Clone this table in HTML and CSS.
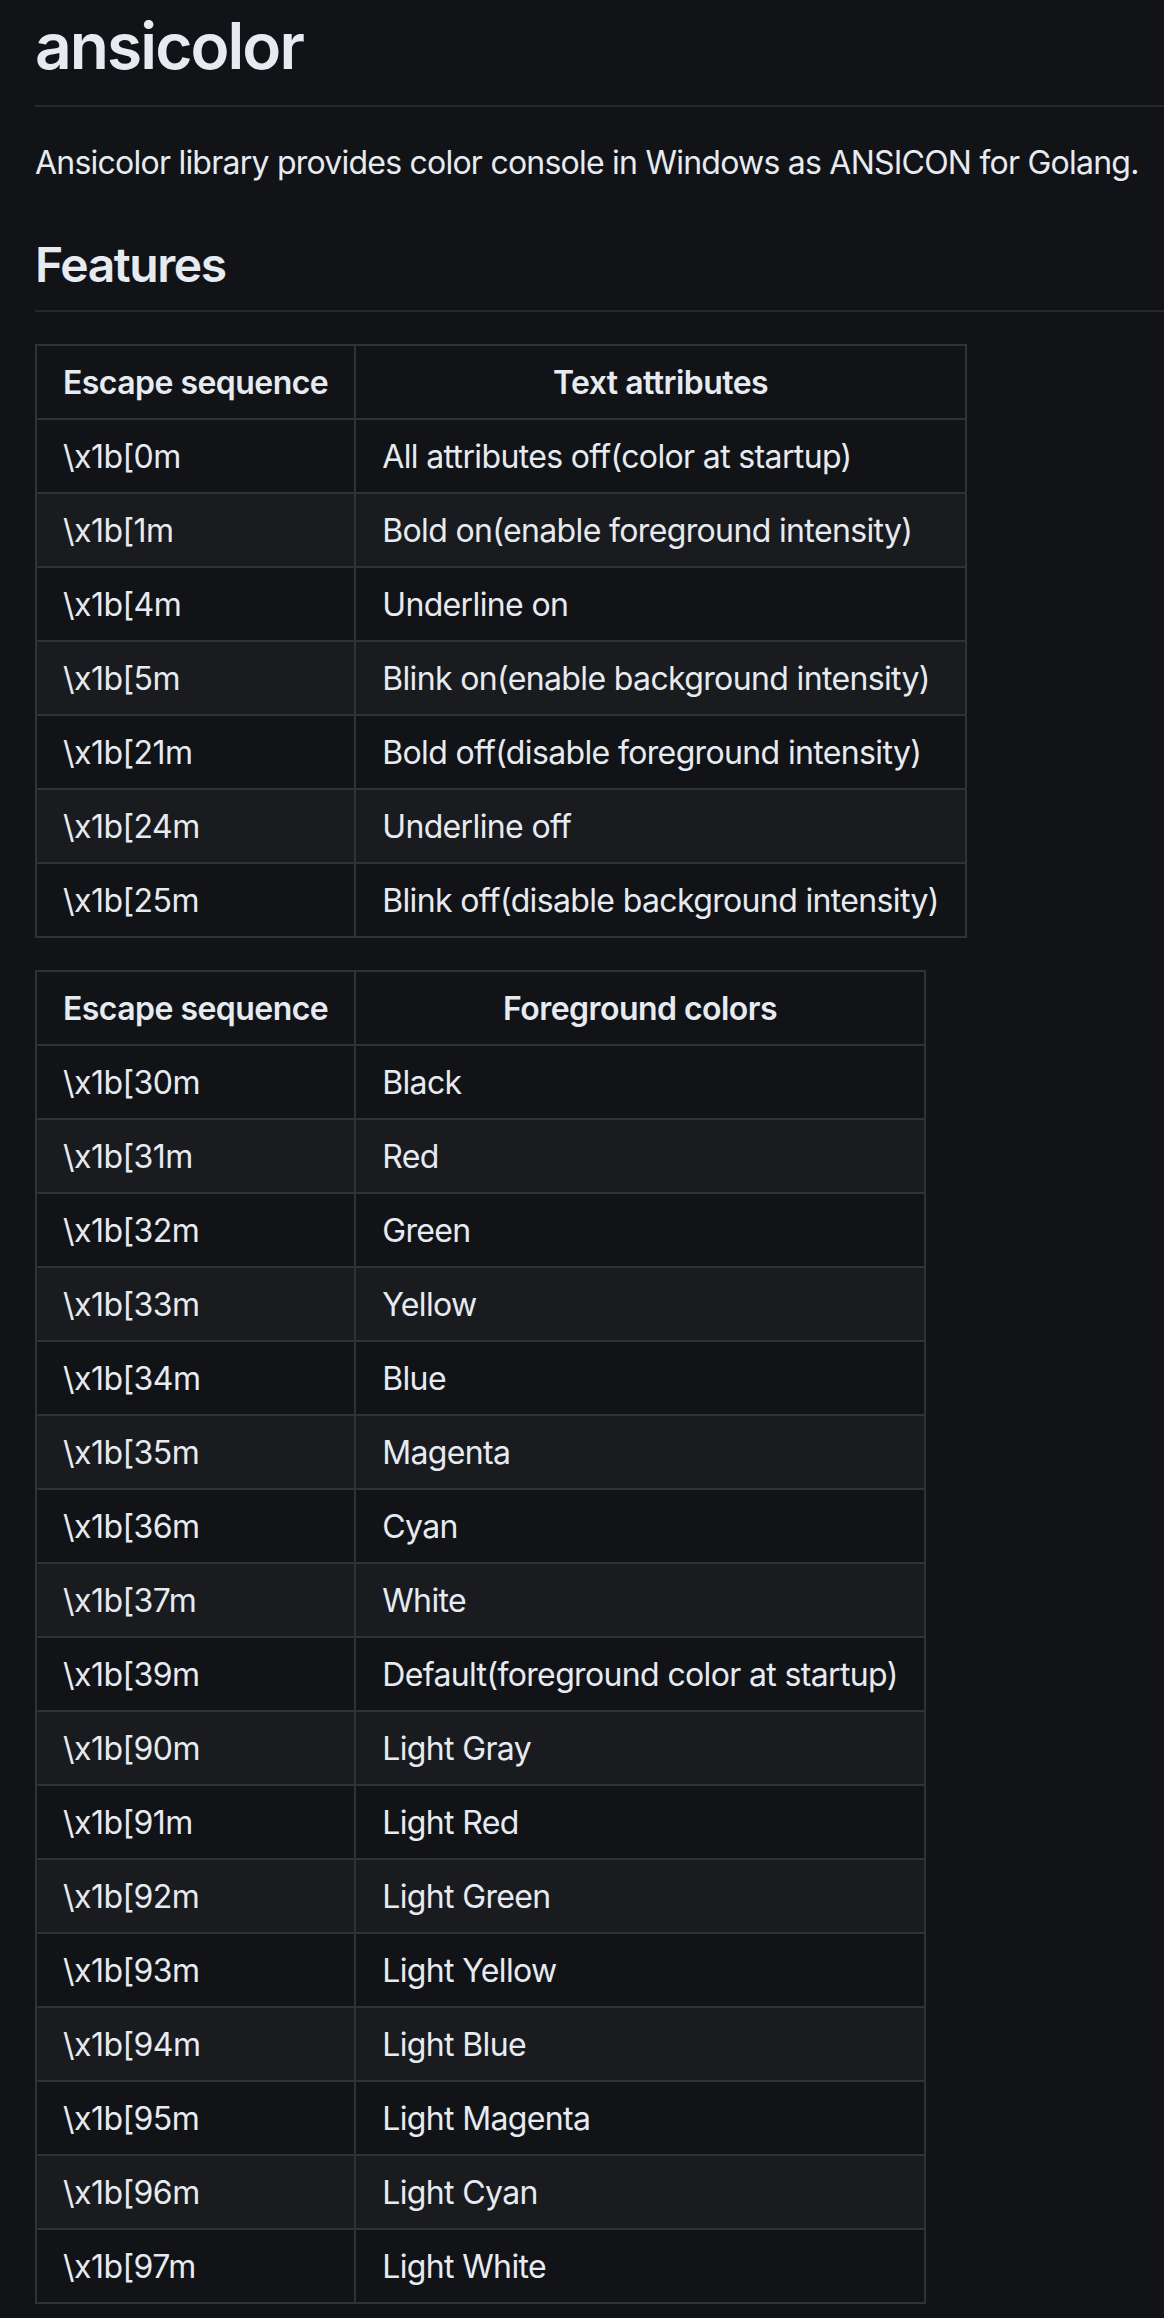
FILE: index.html
```html
<!DOCTYPE html>
<html lang="en">
<head>
    <meta charset="UTF-8">
    <meta name="viewport" content="width=device-width, initial-scale=1.0">
    <title>ansicolor</title>
    <link rel="stylesheet" href="styles.css">
</head>
<body>
    <article class="markdown-body">
        <h1>ansicolor</h1>
        <p>Ansicolor library provides color console in Windows as ANSICON for Golang.</p>
        <h2>Features</h2>

        <table>
            <thead>
                <tr><th>Escape sequence</th><th>Text attributes</th></tr>
            </thead>
            <tbody>
                <tr><td>\x1b[0m</td><td>All attributes off(color at startup)</td></tr>
                <tr><td>\x1b[1m</td><td>Bold on(enable foreground intensity)</td></tr>
                <tr><td>\x1b[4m</td><td>Underline on</td></tr>
                <tr><td>\x1b[5m</td><td>Blink on(enable background intensity)</td></tr>
                <tr><td>\x1b[21m</td><td>Bold off(disable foreground intensity)</td></tr>
                <tr><td>\x1b[24m</td><td>Underline off</td></tr>
                <tr><td>\x1b[25m</td><td>Blink off(disable background intensity)</td></tr>
            </tbody>
        </table>

        <table>
            <thead>
                <tr><th>Escape sequence</th><th>Foreground colors</th></tr>
            </thead>
            <tbody>
                <tr><td>\x1b[30m</td><td>Black</td></tr>
                <tr><td>\x1b[31m</td><td>Red</td></tr>
                <tr><td>\x1b[32m</td><td>Green</td></tr>
                <tr><td>\x1b[33m</td><td>Yellow</td></tr>
                <tr><td>\x1b[34m</td><td>Blue</td></tr>
                <tr><td>\x1b[35m</td><td>Magenta</td></tr>
                <tr><td>\x1b[36m</td><td>Cyan</td></tr>
                <tr><td>\x1b[37m</td><td>White</td></tr>
                <tr><td>\x1b[39m</td><td>Default(foreground color at startup)</td></tr>
                <tr><td>\x1b[90m</td><td>Light Gray</td></tr>
                <tr><td>\x1b[91m</td><td>Light Red</td></tr>
                <tr><td>\x1b[92m</td><td>Light Green</td></tr>
                <tr><td>\x1b[93m</td><td>Light Yellow</td></tr>
                <tr><td>\x1b[94m</td><td>Light Blue</td></tr>
                <tr><td>\x1b[95m</td><td>Light Magenta</td></tr>
                <tr><td>\x1b[96m</td><td>Light Cyan</td></tr>
                <tr><td>\x1b[97m</td><td>Light White</td></tr>
            </tbody>
        </table>
    </article>
</body>
</html>
```

FILE: styles.css
```css
html, body {
    margin: 0;
    background-color: #121317;
}
.markdown-body {
    font-family: Inter, "Noto Sans", sans-serif;
    font-size: 32px;
    line-height: 1.5;
    letter-spacing: -0.02em;
    color: #e6ebf2;
    padding: 6px 0 0 35px;
}
h1, h2 {
    margin: 0 0 32px;
    font-weight: 600;
    line-height: 1.25;
    letter-spacing: -0.03em;
    padding-bottom: 0.3em;
    border-bottom: 2px solid #26282d;
}
h1 {
    font-size: 64px;
}
h2 {
    font-size: 48px;
    margin-top: 48px;
}
p {
    margin: 0 0 32px;
    letter-spacing: -0.024em;
}
table {
    border-collapse: collapse;
    border-spacing: 0;
    margin: 0 0 32px;
}
th, td {
    padding: 13px 26px 11px;
    border: 2px solid #303238;
    letter-spacing: -0.017em;
}
th {
    font-weight: 600;
    text-align: center;
}
td {
    text-align: left;
}
td + td {
    letter-spacing: -0.02em;
}
tr {
    background-color: #121317;
}
tbody tr:nth-child(2n) {
    background-color: #1a1b1f;
}
```
